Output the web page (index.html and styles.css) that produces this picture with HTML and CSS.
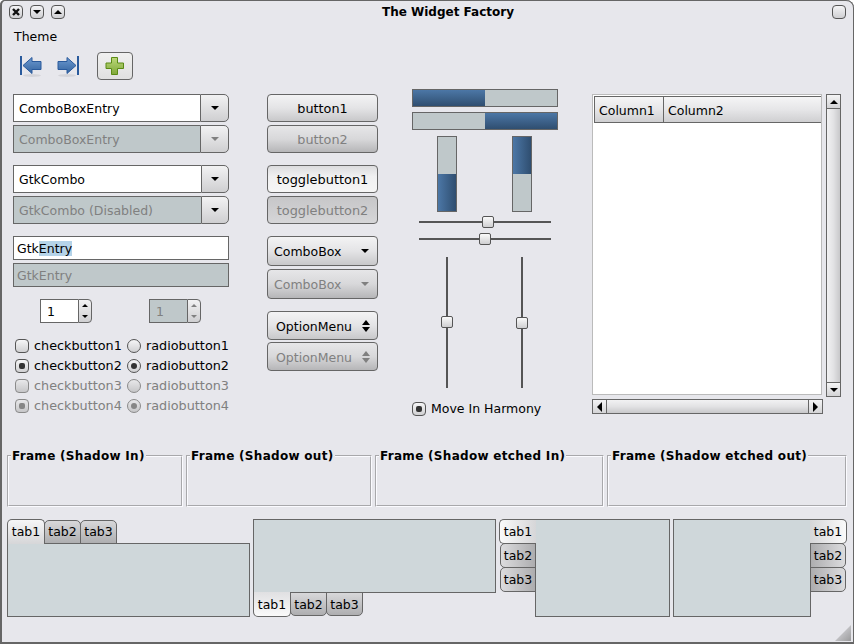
FILE: index.html
```html
<!DOCTYPE html>
<html lang="en">
<head>
<meta charset="utf-8">
<title>The Widget Factory</title>
<link rel="stylesheet" href="styles.css">
</head>
<body>
<div class="window">
  <header class="titlebar">
    <div class="wm-group">
      <span class="wm-btn"><svg width="12" height="12" viewBox="0 0 12 12"><path d="M3 3 L9 9 M9 3 L3 9" stroke="#111" stroke-width="2.4"/></svg></span>
      <span class="wm-btn"><i class="tri down"></i></span>
      <span class="wm-btn"><i class="tri up"></i></span>
    </div>
    <div class="title">The Widget Factory</div>
    <span class="wm-btn plain"></span>
  </header>
  <div class="menubar">Theme</div>
  <div class="toolbar">
    <span class="tool">
      <svg width="24" height="26" viewBox="0 0 24 26"><defs><linearGradient id="bl" x1="0" y1="0" x2="0" y2="1"><stop offset="0" stop-color="#6d9ad0"/><stop offset="1" stop-color="#33639f"/></linearGradient></defs><ellipse cx="13" cy="21.5" rx="9" ry="1.5" fill="#000" opacity=".08"/><rect x="1" y="2" width="2" height="19" fill="#2a5a9c"/><path d="M4 11.5 L13 3.5 V7.5 H22 V15.5 H13 V19.5 Z" fill="url(#bl)" stroke="#2a5a9c"/></svg>
    </span>
    <span class="tool">
      <svg width="24" height="26" viewBox="0 0 24 26"><ellipse cx="11" cy="21.5" rx="9" ry="1.5" fill="#000" opacity=".08"/><rect x="21" y="2" width="2" height="19" fill="#2a5a9c"/><path d="M20 11.5 L11 3.5 V7.5 H2 V15.5 H11 V19.5 Z" fill="url(#bl)" stroke="#2a5a9c"/></svg>
    </span>
    <span class="tool-btn">
      <svg width="20" height="20" viewBox="0 0 20 20"><defs><linearGradient id="gr" x1="0" y1="0" x2="0" y2="1"><stop offset="0" stop-color="#bcd87a"/><stop offset="1" stop-color="#7fa838"/></linearGradient></defs><path d="M6.5 1.5 H12.5 V7 H18.5 V12.5 H12.5 V18.5 H6.5 V12.5 H1 V7 H6.5 Z" fill="url(#gr)" stroke="#5a8a14"/></svg>
    </span>
  </div>

  <main class="content">
    <section class="col1">
      <div class="stack">
        <div class="combo"><span class="field">ComboBoxEntry</span><span class="drop"><i class="tri down"></i></span></div>
        <div class="combo off"><span class="field">ComboBoxEntry</span><span class="drop"><i class="tri down grey"></i></span></div>
      </div>
      <div class="stack">
        <div class="combo wide"><span class="field">GtkCombo</span><span class="drop"><i class="tri down"></i></span></div>
        <div class="combo wide off"><span class="field">GtkCombo (Disabled)</span><span class="drop"><i class="tri down"></i></span></div>
      </div>
      <div class="stack">
        <div class="entry">Gtk<span class="sel">Entry</span></div>
        <div class="entry off">GtkEntry</div>
      </div>
      <div class="spins">
        <div class="spin"><span class="spin-val">1</span><span class="spin-btns"><span><i class="tri up small"></i></span><span><i class="tri down small"></i></span></span></div>
        <div class="spin off"><span class="spin-val">1</span><span class="spin-btns"><span><i class="tri up small grey"></i></span><span><i class="tri down small grey"></i></span></span></div>
      </div>
      <div class="choices">
        <label class="choice"><i class="check"></i>checkbutton1</label>
        <label class="choice"><i class="radio"></i>radiobutton1</label>
        <label class="choice"><i class="check on"></i>checkbutton2</label>
        <label class="choice"><i class="radio on"></i>radiobutton2</label>
        <label class="choice off"><i class="check"></i>checkbutton3</label>
        <label class="choice off"><i class="radio"></i>radiobutton3</label>
        <label class="choice off"><i class="check on"></i>checkbutton4</label>
        <label class="choice off"><i class="radio on"></i>radiobutton4</label>
      </div>
    </section>

    <section class="col2">
      <div class="stack">
        <div class="btn">button1</div>
        <div class="btn off">button2</div>
      </div>
      <div class="stack">
        <div class="btn toggle">togglebutton1</div>
        <div class="btn toggle off">togglebutton2</div>
      </div>
      <div class="stack">
        <div class="btn tall menu"><span>ComboBox</span><i class="tri down"></i></div>
        <div class="btn tall menu off"><span>ComboBox</span><i class="tri down grey"></i></div>
      </div>
      <div class="stack opt">
        <div class="btn tall menu option"><span>OptionMenu</span><span class="updown"><i class="tri up"></i><i class="tri down"></i></span></div>
        <div class="btn tall menu option off"><span>OptionMenu</span><span class="updown"><i class="tri up grey"></i><i class="tri down grey"></i></span></div>
      </div>
    </section>

    <section class="col3">
      <div class="hbar"><span class="fill"></span><span></span></div>
      <div class="hbar"><span></span><span class="fill"></span></div>
      <div class="vbars">
        <div class="vbar"><span></span><span class="fill"></span></div>
        <div class="vbar"><span class="fill"></span><span></span></div>
      </div>
      <div class="hscale"><i class="thumb h1"></i></div>
      <div class="hscale"><i class="thumb h2"></i></div>
      <div class="vscales">
        <div class="vscale"><i class="thumb v1"></i></div>
        <div class="vscale"><i class="thumb v2"></i></div>
      </div>
      <label class="choice harmony"><i class="check on"></i>Move In Harmony</label>
    </section>

    <section class="col4">
      <div class="tree-row">
        <div class="tree">
          <div class="tree-head"><span class="c1">Column1</span><span class="c2">Column2</span></div>
        </div>
        <div class="vsb">
          <span class="sb-btn"><i class="tri up"></i></span>
          <span class="vsb-slider"></span>
          <span class="sb-btn end"><i class="tri down"></i></span>
        </div>
      </div>
      <div class="hsb">
        <span class="sb-btn"><i class="tri left"></i></span>
        <span class="hsb-slider"></span>
        <span class="sb-btn end"><i class="tri right"></i></span>
      </div>
    </section>
  </main>

  <div class="frames">
    <fieldset class="frame f1"><legend>Frame (Shadow In)</legend></fieldset>
    <fieldset class="frame f2"><legend>Frame (Shadow out)</legend></fieldset>
    <fieldset class="frame f3"><legend>Frame (Shadow etched In)</legend></fieldset>
    <fieldset class="frame f4"><legend>Frame (Shadow etched out)</legend></fieldset>
  </div>

  <div class="notebooks">
    <div class="nb top">
      <div class="tabs"><span class="tab active">tab1</span><span class="tab">tab2</span><span class="tab">tab3</span></div>
      <div class="page"></div>
    </div>
    <div class="nb bottom">
      <div class="page"></div>
      <div class="tabs"><span class="tab active">tab1</span><span class="tab">tab2</span><span class="tab">tab3</span></div>
    </div>
    <div class="nb left">
      <div class="tabs"><span class="tab active">tab1</span><span class="tab">tab2</span><span class="tab">tab3</span></div>
      <div class="page"></div>
    </div>
    <div class="nb right">
      <div class="page"></div>
      <div class="tabs"><span class="tab active">tab1</span><span class="tab">tab2</span><span class="tab">tab3</span></div>
    </div>
  </div>
  <div class="grip"></div>
</div>
</body>
</html>
```

FILE: styles.css
```css
* { box-sizing: border-box; }
html, body { margin: 0; padding: 0; background: #fff; }
body { font: 12.5px/16px "DejaVu Sans", sans-serif; color: #000; }

.window {
  position: relative;
  width: 854px;
  height: 644px;
  overflow: hidden;
  background: #e7e7ec;
  border-radius: 5px 8px 0 0;
  box-shadow: inset 2px 0 0 #666, inset 0 1px 0 #666, inset -1px 0 0 #666, inset 0 -2px 0 #666;
}

/* title bar */
.titlebar { display: flex; align-items: center; height: 24px; padding: 0 8px 0 9px; }
.wm-group { display: flex; gap: 7px; }
.wm-btn {
  display: flex; align-items: center; justify-content: center;
  width: 14px; height: 14px;
  border: 1px solid #555; border-radius: 4px;
  background: linear-gradient(#f4f4f6, #cfcfd2);
}
.title { flex: 1; text-align: center; font-size: 12px; font-weight: bold; padding-right: 1px; }

.menubar { height: 24px; padding: 5px 0 0 14px; }
.toolbar { display: flex; align-items: flex-start; height: 41px; padding: 4px 0 0 19px; }
.tool { width: 37px; height: 28px; padding-top: 2px; }
.tool svg, .tool-btn svg { display: block; }
.tool-btn {
  display: flex; align-items: center; justify-content: center;
  width: 36px; height: 28px; margin-left: 4px;
  border: 1px solid #666; border-radius: 4px;
  background: linear-gradient(#f0f0f0, #e0e0e0);
}

/* triangles */
.tri { display: block; width: 0; height: 0; border-style: solid; border-color: transparent; }
.tri.down { border-width: 4px 4px 0; border-top-color: #000; }
.tri.up { border-width: 0 4px 4px; border-bottom-color: #000; }
.tri.left { border-width: 5px 5px 5px 0; border-right-color: #000; }
.tri.right { border-width: 5px 0 5px 5px; border-left-color: #000; }
.tri.small.down { border-width: 3px 3px 0; }
.tri.small.up { border-width: 0 3px 3px; }
.tri.down.grey { border-top-color: #808080; }
.tri.up.grey { border-bottom-color: #808080; }

/* columns */
.content { display: flex; height: 345px; padding-left: 13px; }
.col1 { width: 216px; padding-top: 5px; }
.col2 { width: 111px; margin-left: 38px; padding-top: 5px; }
.col3 { width: 146px; margin-left: 34px; }
.col4 { width: 249px; margin-left: 34px; padding-top: 5px; }
.stack { display: flex; flex-direction: column; gap: 3px; margin-bottom: 12px; }

/* combo */
.combo { display: flex; height: 28px; }
.field {
  flex: 1; padding: 6px 0 0 5px;
  background: #fff; border: 1px solid #666; border-right: 0;
}
.drop {
  display: flex; align-items: center; justify-content: center;
  width: 29px;
  border: 1px solid #666; border-radius: 0 5px 5px 0;
  background: linear-gradient(#f2f2f3, #cfcfd1);
}
.combo.wide .drop { width: 28px; }
.combo.off .field { background: #bfc8ca; color: #808080; }

/* entry */
.entry { height: 24px; padding: 4px 0 0 3px; background: #fff; border: 1px solid #666; }
.entry.off { background: #bfc8ca; color: #808080; }
.sel { background: #b5d3e8; }

/* spin */
.spins { display: flex; gap: 57px; padding-left: 27px; }
.spin { display: flex; width: 52px; height: 24px; }
.spin-val { flex: 1; padding: 4px 0 0 6px; background: #fff; border: 1px solid #666; border-right: 0; }
.spin-btns {
  display: flex; flex-direction: column; width: 14px;
  border: 1px solid #666; border-radius: 0 4px 4px 0; overflow: hidden;
  background: linear-gradient(#f2f2f3, #cfcfd1);
}
.spin-btns span { flex: 1; display: flex; align-items: center; justify-content: center; }
.spin.off .spin-val { background: #bfc8ca; color: #808080; }

/* checks */
.choices { display: grid; grid-template-columns: 112px auto; grid-auto-rows: 20px; margin-top: 12px; padding-left: 2px; font-size: 12.8px; }
.choice { display: flex; align-items: center; gap: 5px; padding-top: 1px; }
.choice.off { color: #808080; }
.check, .radio {
  display: flex; align-items: center; justify-content: center;
  flex: none; width: 14px; height: 14px;
  border: 1px solid #555;
  background: linear-gradient(#f6f6f7, #d0d0d2);
}
.check { border-radius: 4px; }
.radio { border-radius: 50%; }
.choice.off .check, .choice.off .radio { border-color: #8a8a8a; background: linear-gradient(#e8e8ea, #c6c6c8); }
.check.on::after, .radio.on::after {
  content: ""; width: 6px; height: 6px; border-radius: 50%; background: #333;
}
.check.on::after { border-radius: 2px; }
.choice.off .on::after { background: #868686; }

/* buttons */
.btn {
  display: flex; align-items: center; justify-content: center;
  height: 28px; padding-top: 2px;
  border: 1px solid #666; border-radius: 4px;
  background: linear-gradient(#f3f3f4, #e4e4e6 50%, #c8c8ca);
  font-size: 12.8px;
}
.btn.off { color: #808080; background: linear-gradient(#e6e6e8, #d8d8da 50%, #b6b6b8); }
.btn.toggle { font-size: 12.9px; background: linear-gradient(#dcdcde, #f0f0f1 40%, #f6f6f6); }
.btn.toggle.off { background: linear-gradient(#c6c6c8, #d6d6d8); }
.btn.tall { height: 30px; font-size: 12.5px; }
.btn.menu { justify-content: space-between; padding: 2px 8px 0 6px; }
.btn.option { height: 29px; padding: 2px 7px 0 8px; }
.btn.menu .tri { margin-top: -2px; }
.stack.opt { gap: 2px; }
.updown { display: flex; flex-direction: column; gap: 2px; margin-top: -2px; }
.updown .tri { margin-top: 0 !important; border-top-width: 5px; }
.updown .tri.up { border-top-width: 0; border-bottom-width: 5px; }

/* progress */
.hbar { display: flex; width: 146px; height: 18px; margin-bottom: 5px; border: 1px solid #666; background: #bfc8ca; }
.hbar span { flex: 1; }
.hbar .fill { background: linear-gradient(#4c77a6, #2f4e70); }
.vbars { display: flex; gap: 55px; padding-left: 25px; margin-top: 6px; }
.vbar { display: flex; flex-direction: column; width: 20px; height: 76px; border: 1px solid #666; background: #bfc8ca; }
.vbar span { flex: 1; }
.vbar .fill { background: linear-gradient(90deg, #4c77a6, #2f4e70); }

/* scales */
.hscale { position: relative; width: 132px; height: 12px; margin: 4px 0 5px 7px; }
.hscale::before { content: ""; position: absolute; left: 0; right: 0; top: 5px; height: 2px; background: #555; }
.hscale + .hscale { margin-top: 0; }
.vscales { display: flex; gap: 73px; padding-left: 34px; margin-top: 12px; }
.vscale { position: relative; width: 2px; height: 131px; background: #555; }
.thumb {
  position: absolute; width: 12px; height: 12px;
  border: 1px solid #555; border-radius: 2px;
  background: linear-gradient(#fafafa, #cfcfd1);
}
.thumb.h1 { left: 63px; top: 0; }
.thumb.h2 { left: 60px; top: 0; }
.thumb.v1 { left: -5px; top: 59px; }
.thumb.v2 { left: -5px; top: 60px; }
.harmony { margin-top: 12px; }

/* tree */
.tree-row { display: flex; gap: 4px; }
.tree { width: 230px; height: 301px; padding: 1px 0 1px 1px; background: #fff; border: 1px solid #bbb; }
.tree-head {
  display: flex; height: 27px;
  border: 1px solid #666; border-right: 0;
  background: linear-gradient(#f5f5f6, #e6e6e8 50%, #cfcfd1);
}
.c1 { width: 69px; padding: 6px 0 0 4px; border-right: 1px solid #666; }
.c2 { flex: 1; padding: 6px 0 0 4px; }

.vsb { display: flex; flex-direction: column; width: 15px; height: 303px; border: 1px solid #666; }
.sb-btn { flex: none; display: flex; align-items: center; justify-content: center; width: 14px; height: 14px; background: linear-gradient(#f4f4f5, #d4d4d6); }
.vsb .sb-btn { width: 13px; border-bottom: 1px solid #666; }
.vsb .sb-btn.end { border-top: 1px solid #666; border-bottom: 0; }
.vsb-slider { flex: 1; background: linear-gradient(90deg, #f2f2f3, #e2e2e4 50%, #c8c8ca); }
.hsb { display: flex; width: 231px; height: 15px; margin-top: 2px; border: 1px solid #666; }
.hsb .sb-btn { height: 13px; border-right: 1px solid #666; }
.hsb .sb-btn.end { border-left: 1px solid #666; border-right: 0; }
.hsb-slider { flex: 1; background: linear-gradient(#f2f2f3, #e2e2e4 50%, #c8c8ca); }

/* frames */
.frames { display: flex; height: 73px; padding: 14px 0 0 7px; }
.frame { height: 59px; margin: 0 3px 0 0; padding: 0; min-width: 0; border: 2px groove #fbfbff; }
.frame legend { margin-left: 2px; padding: 0 1px; font-size: 12px; font-weight: bold; letter-spacing: .3px; white-space: nowrap; }
.f1 { width: 176px; }
.f2 { width: 186px; }
.f3 { width: 229px; }
.f4 { width: 240px; }

/* notebooks */
.notebooks { display: flex; gap: 3px; padding: 12px 0 0 7px; }
.nb { display: flex; height: 98px; }
.nb.top, .nb.bottom { flex-direction: column; width: 243px; }
.nb.left { width: 171px; }
.nb.right { width: 174px; }
.page { flex: 1; background: #cfd7da; border: 1px solid #666; }
.tabs { display: flex; flex: none; }
.tab {
  display: block; flex: none; text-align: center;
  border: 1px solid #666;
  background: linear-gradient(#d8d8da, #aeaeb0);
}
.top .tabs, .bottom .tabs { position: relative; z-index: 1; height: 24px; }
.top .tab, .bottom .tab { width: 37px; margin-right: -1px; padding-top: 3px; }
.top .tab { height: 24px; margin-top: 1px; border-radius: 5px 5px 0 0; }
.top .tab.active { width: 38px; height: 25px; margin-top: 0; padding-top: 4px; border-bottom: 0; background: linear-gradient(#f6f6f7, #d6d6d8); }
.bottom .tab { height: 24px; margin-top: -1px; border-radius: 0 0 5px 5px; padding-top: 4px; }
.bottom .tab.active { width: 38px; height: 25px; border-top: 0; padding-top: 5px; background: linear-gradient(#e0e0e2, #fafafa); }

.left .tabs, .right .tabs { flex-direction: column; position: relative; z-index: 1; }
.left .tabs { align-items: flex-end; margin-right: -1px; width: 37px; }
.right .tabs { margin-left: -1px; width: 37px; }
.left .tab, .right .tab { height: 25px; margin-bottom: -1px; padding-top: 4px; }
.left .tab { width: 36px; border-radius: 5px 0 0 5px; background: linear-gradient(90deg, #dcdcde, #adadaf); }
.left .tab.active { width: 37px; border-right: 0; background: linear-gradient(90deg, #fafafa, #d6d6d8); }
.right .tab { width: 36px; border-radius: 0 5px 5px 0; background: linear-gradient(90deg, #adadaf, #dcdcde); }
.right .tab.active { width: 37px; border-left: 0; background: linear-gradient(90deg, #d6d6d8, #fafafa); }

.grip {
  position: absolute; right: 3px; bottom: 3px; width: 16px; height: 16px;
  background: linear-gradient(135deg, #e7e7ec, #9a9a9c);
  clip-path: polygon(100% 0, 100% 100%, 0 100%);
}
```
